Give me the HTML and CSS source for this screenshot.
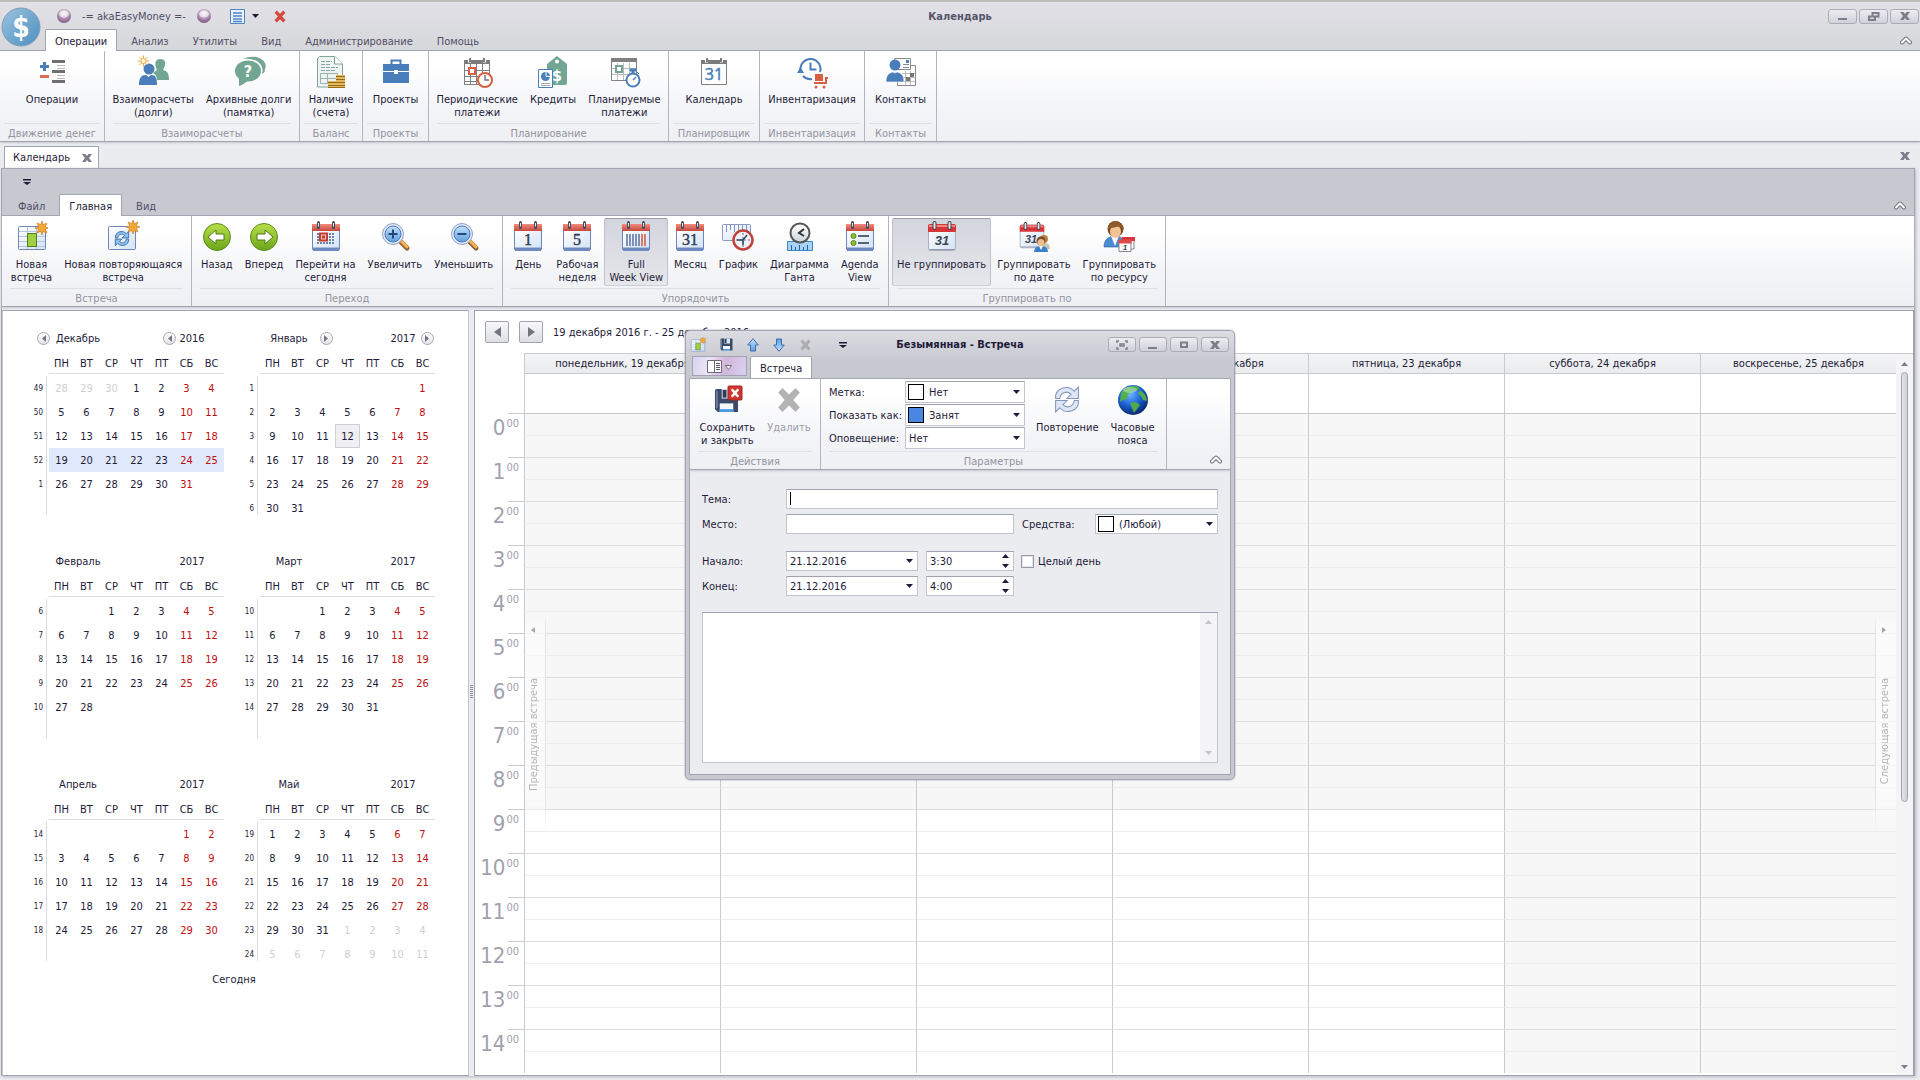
FILE: index.html
```html
<!DOCTYPE html>
<html lang="ru">
<head>
<meta charset="utf-8">
<title>Календарь</title>
<link rel="stylesheet" href="styles.css">
</head>
<body>
<svg class="defs" aria-hidden="true">
  <defs>
    <linearGradient id="g-red" x1="0" y1="0" x2="0" y2="1"><stop offset="0" stop-color="#ef8d7e"/><stop offset="1" stop-color="#c9473c"/></linearGradient>
    <linearGradient id="g-page" x1="0" y1="0" x2="1" y2="1"><stop offset="0" stop-color="#ffffff"/><stop offset="1" stop-color="#d3e2f4"/></linearGradient>
    <linearGradient id="g-green" x1="0" y1="0" x2="0" y2="1"><stop offset="0" stop-color="#b9e048"/><stop offset="1" stop-color="#6ca51c"/></linearGradient>
    <linearGradient id="g-blue" x1="0" y1="0" x2="0" y2="1"><stop offset="0" stop-color="#c4e2fb"/><stop offset="1" stop-color="#5f9fdf"/></linearGradient>
    <linearGradient id="g-grey" x1="0" y1="0" x2="0" y2="1"><stop offset="0" stop-color="#ffffff"/><stop offset="1" stop-color="#cfd4dc"/></linearGradient>
    <radialGradient id="g-orb" cx=".5" cy=".3" r=".7"><stop offset="0" stop-color="#f5eaf5"/><stop offset=".55" stop-color="#b193b5"/><stop offset="1" stop-color="#7a5a80"/></radialGradient>
    <linearGradient id="g-logo" x1="0" y1="0" x2="1" y2="1"><stop offset="0" stop-color="#9cc3e0"/><stop offset="1" stop-color="#4c8fc0"/></linearGradient>
    <radialGradient id="g-globe" cx=".4" cy=".3" r=".75"><stop offset="0" stop-color="#6fb8ff"/><stop offset=".5" stop-color="#1d62d8"/><stop offset="1" stop-color="#06205e"/></radialGradient>
    <symbol id="cal" viewBox="0 0 32 32">
      <path d="M2.500 8.500h27v20h-27z" fill="url(#g-page)" stroke="#6f86bb"/>
      <path d="M3 27h26v3H3z" fill="#6e8ac0"/><path d="M3 26.500h26" stroke="#a9bde0"/>
      <path d="M2 3h28v7H2z" fill="url(#g-red)"/>
      <path d="M8.500 1.500v5M23.500 1.500v5" stroke="#454d60" stroke-width="3" stroke-linecap="round"/><path d="M8.500 2v3.500M23.500 2v3.500" stroke="#e6e9ef"/>
    </symbol>
    <symbol id="cal-plain" viewBox="0 0 32 32">
      <rect x="2.500" y="3.500" width="27" height="26" rx="2" fill="url(#g-page)" stroke="#aab0c0"/>
      <path d="M3 28.500h26" stroke="#8e98ad"/>
      <path d="M2 5q0-2 2-2h24q2 0 2 2v6H2z" fill="#d8343a"/><path d="M3 4h26v2H3z" fill="#ee8a86"/>
      <path d="M8.500 2v5M23.500 2v5" stroke="#3d3f4a" stroke-width="4" stroke-linecap="round"/><path d="M8.500 2v5M23.500 2v5" stroke="#e4e6ea" stroke-width="2" stroke-linecap="round"/>
    </symbol>
    <symbol id="cal-line" viewBox="0 0 32 32">
      <path d="M3.500 5v23.500h25V5" fill="#fff" stroke="#808080"/><path d="M3 4h26v4H3z" fill="#7b7b7b"/>
      <path d="M7 1.500h3v5H7zM22 1.500h3v5h-3z" fill="#fff"/><path d="M8 2h2v4H8zM22 2h2v4h-2z" fill="#7b7b7b"/>
    </symbol>
    <symbol id="spark" viewBox="0 0 14 14"><path d="M7 0l1.300 3.600L12 2l-1.600 3.700L14 7l-3.600 1.300L12 12 8.300 10.400 7 14 5.700 10.400 2 12l1.600-3.700L0 7l3.600-1.300L2 2l3.700 1.600z" fill="#f3a93a" stroke="#c9751d" stroke-width=".6"/></symbol>
    <symbol id="floppy" viewBox="0 0 26 26"><path d="M1 3q0-2 2-2h20q2 0 2 2v22H4l-3-3z" fill="#3a4a68"/><path d="M2 3h2v18H2z" fill="#6d7d9b"/><path d="M8 1h12v10H8z" fill="#d5e6f8"/><path d="M9 2h4v8H9z" fill="#2f3d58"/><path d="M6 16h14v9H6z" fill="#f4f8fc"/><path d="M6 22h14v3H6z" fill="#4b9be0"/></symbol>
    <symbol id="cross" viewBox="0 0 24 24"><path d="M2 5l4-4 6 6 6-6 4 4-6 7 6 7-4 4-6-6-6 6-4-4 6-7z" fill="currentColor"/></symbol>
    <symbol id="arrow-up" viewBox="0 0 12 14"><path d="M6 .700L11.300 7H8.500v6h-5V7H.700z" fill="url(#g-blue)" stroke="#3c6eb4"/></symbol>
    <symbol id="cycle" viewBox="0 0 26 28"><path d="M2 13C1 3 14-1 20 6l4-4v11H13l4-4C13 5 7 7 6 13z"/><path d="M24 15c1 10-12 14-18 7l-4 4V15h11l-4 4c4 4 10 2 11-4z"/></symbol>
    <symbol id="chev" viewBox="0 0 12 10"><path d="M2 7.500L6 3.500l4 4" fill="none" stroke="#73747f" stroke-width="4" stroke-linecap="round" stroke-linejoin="round"/><path d="M2 7.500L6 3.500l4 4" fill="none" stroke="#fff" stroke-width="2" stroke-linecap="round" stroke-linejoin="round"/></symbol>
    <symbol id="close" viewBox="0 0 10 8"><path d="M0 0h3.500L5 2l1.500-2H10L7 4l3 4H6.500L5 6 3.500 8H0l3-4z" fill="#7c7d8a"/></symbol>
    <symbol id="orb" viewBox="0 0 16 16"><circle cx="8" cy="8" r="7" fill="url(#g-orb)"/><ellipse cx="8" cy="6" rx="5" ry="3.600" fill="#fff" opacity=".6"/></symbol>
    <symbol id="down" viewBox="0 0 7 4"><path d="M0 0h7L3.500 4z" fill="#1e1b39"/></symbol>
    <symbol id="more" viewBox="0 0 8 6"><path d="M0 0h8v1.500H0zM0 3h8L4 6z" fill="#1e1b39"/></symbol>
    <symbol id="newcal" viewBox="0 0 32 32">
      <rect x="2.500" y="5.500" width="27" height="23" rx="1" fill="url(#g-page)" stroke="#7186b8"/>
      <path d="M3 10.500h26M3 15.500h26M3 20.500h26M3 25.500h26M11.500 6v22M20.500 6v22" stroke="#b4c3e0"/>
      <path d="M11.500 12.500h9v13h-9z" fill="#a2d040" stroke="#4f7d26"/>
      <use href="#spark" x="19" y="0" width="14" height="14"/>
    </symbol>
  </defs>
</svg>

<div class="app">
  <header class="app-head">
    <svg class="logo" viewBox="0 0 40 40" width="40" height="40"><circle cx="20" cy="20" r="19" fill="url(#g-logo)" stroke="#7f9db4"/><text x="20" y="30" text-anchor="middle" class="t-logo">$</text></svg>
    <div class="titlebar">
      <div class="qat">
        <svg width="16" height="16"><use href="#orb"/></svg>
        <span>-= akaEasyMoney =-</span>
        <svg width="16" height="16"><use href="#orb"/></svg>
        <button class="bare split" aria-label="Список">
          <svg width="15" height="15" viewBox="0 0 15 15"><path d="M.500.500h14v14H.500z" fill="#eaf2fb" stroke="#4d86c6"/><path d="M3 4h9M3 7h9M3 10h9M3 12.500h9" stroke="#4d86c6" stroke-width="1.500"/></svg>
          <svg width="7" height="4"><use href="#down"/></svg>
        </button>
        <button class="bare red" aria-label="Закрыть"><svg width="14" height="13"><use href="#cross"/></svg></button>
      </div>
      <h1 class="win-title">Календарь</h1>
      <div class="winbtns">
        <button class="winbtn" aria-label="Свернуть"><svg width="10" height="8"><path d="M0 6h9v2H0z" fill="#7c7d8a"/></svg></button>
        <button class="winbtn" aria-label="Восстановить"><svg width="12" height="9"><path d="M4.500 1h6v3.500h-6zM1 4.500h6V8H1z" fill="none" stroke="#7c7d8a" stroke-width="2"/></svg></button>
        <button class="winbtn" aria-label="Закрыть окно"><svg width="10" height="8"><use href="#close"/></svg></button>
      </div>
    </div>
    <nav class="tabs main-tabs">
      <button class="tab on">Операции</button><button class="tab">Анализ</button><button class="tab">Утилиты</button><button class="tab">Вид</button><button class="tab">Администрирование</button><button class="tab">Помощь</button>
      <button class="bare collapse" aria-label="Свернуть ленту"><svg width="12" height="10"><use href="#chev"/></svg></button>
    </nav>
  </header>

  <section class="ribbon">
    <div class="group g105"><div class="items">
      <button class="item"><svg width="32" height="32" viewBox="0 0 32 32"><path d="M4 9h9v3H4zM7 6h3v9H7z" fill="#4a7ebb"/><path d="M4 19h9v3H4z" fill="#db6f55"/><path d="M16 4h13v3H16zM16 14h13v3H16zM16 24h13v3H16z" fill="#6f6f6f"/><path d="M21 9.500h8M21 12.500h8M21 19.500h8M21 22.500h8" stroke="#bcbcbc"/></svg>Операции</button>
    </div><div class="cap">Движение денег</div></div>
    <div class="group g195"><div class="items">
      <button class="item"><svg width="32" height="32" viewBox="0 0 32 32"><path d="M23 3c7 0 6 6 3 11 5 1 6 4 6 10H20c0-4-2-6-4-7l4-3c-3-6-2-11 3-11z" fill="#73a692"/><circle cx="12" cy="13" r="5.500" fill="#4a7ebb"/><path d="M2 29c0-7 2-10 7-10l2.500 2 2.500-2c5 0 6 3 6 10z" fill="#4a7ebb"/><path d="M6.500-.500v11M1 5h11M2.500 1l8 8M10.500 1l-8 8" stroke="#f0a93c"/><circle cx="6.500" cy="5" r="2.500" fill="#fff" stroke="#f0a93c"/></svg>Взаиморасчеты<br>(долги)</button>
      <button class="item"><svg width="32" height="32" viewBox="0 0 32 32"><path d="M10 3C22-3 36 4 32 13c0 3-1 4-3 5 3-9-6-17-19-15z" fill="#73a692"/><ellipse cx="15" cy="15" rx="13" ry="10.500" fill="#73a692"/><path d="M6 21v9q6-2 9-6z" fill="#73a692"/><text x="15" y="21" text-anchor="middle" class="t-q">?</text></svg>Архивные долги<br>(памятка)</button>
    </div><div class="cap">Взаиморасчеты</div></div>
    <div class="group g63"><div class="items">
      <button class="item"><svg width="32" height="32" viewBox="0 0 32 32"><path d="M4.500.500H20L27.500 8v23h-25V2.500z" fill="#edf3f1" stroke="#84a39b"/><path d="M19.500.500V8h8" fill="#fff" stroke="#84a39b"/><path d="M6 5.500h11M6 8.500h10M6 11.500h17M6 14.500h14" stroke="#8aa59f" stroke-dasharray="4 1"/><path d="M5.500 17.500h17v10h-17zM5.500 22.500h17M12.500 17.500v10" fill="none" stroke="#9ab3ad"/><path d="M21 19h9v13h-9zM13 25h9v7h-9z" fill="#e2b85a"/><path d="M21 20.500h9M21 23.500h9M21 26.500h9M13 26.500h17M13 29.500h17M13 31.500h17" stroke="#956a1c"/></svg>Наличие<br>(счета)</button>
    </div><div class="cap">Баланс</div></div>
    <div class="group g66"><div class="items">
      <button class="item"><svg width="32" height="32" viewBox="0 0 32 32"><path d="M3 8h26v19H3z" fill="#4a7ebb"/><path d="M11.500 8V4.500h9V8" fill="none" stroke="#4a7ebb" stroke-width="2"/><path d="M3 15.500h26" stroke="#fff"/><path d="M14 14h4v4h-4z" fill="#fff"/></svg>Проекты</button>
    </div><div class="cap">Проекты</div></div>
    <div class="group g240"><div class="items">
      <button class="item"><svg width="32" height="32" viewBox="0 0 32 32"><use href="#cal-line"/><path d="M4 14.500h24M4 20.500h24M4 25.500h24M9.500 8v20M15.500 8v20M21.500 8v20" stroke="#808080"/><path d="M8 12h6v6H8z" fill="#fff" stroke="#d75f43" stroke-width="2"/><circle cx="24" cy="24" r="7" fill="#fff" stroke="#d75f43" stroke-width="2"/><path d="M24 19v5h4" fill="none" stroke="#777" stroke-width="1.500"/></svg>Периодические<br>платежи</button>
      <button class="item"><svg width="32" height="32" viewBox="0 0 32 32"><path d="M10 8l10-8 10 8v19q0 2-2 2H10z" fill="#73a692"/><circle cx="20" cy="5.500" r="2" fill="#fff"/><text x="20" y="25" text-anchor="middle" class="t-q">$</text><path d="M1.500 13.500h14v18h-14z" fill="#fff" stroke="#4a7ebb"/><circle cx="8.500" cy="20.500" r="4.500" fill="#4a7ebb"/><path d="M9 16v4.500h4.500" stroke="#fff" fill="none"/><path d="M4 27.500h9M4 29.500h9" stroke="#aaa"/></svg>Кредиты</button>
      <button class="item"><svg width="32" height="32" viewBox="0 0 32 32"><path d="M3.500 5.500h25v19h-25z" fill="#fff" stroke="#808080"/><path d="M3 2h26v4H3z" fill="#808080"/><path d="M4 12.500h24M4 18.500h24M9.500 7v17M15.500 7v17M21.500 7v17" stroke="#bbb"/><path d="M8 10h6v6H8z" fill="#fff" stroke="#73a692" stroke-width="2"/><circle cx="25" cy="24" r="6.500" fill="#fff" stroke="#4a7ebb" stroke-width="2"/><path d="M22 13h6v2h-2v2h-2v-2h-2zM29 16l2 2" fill="#4a7ebb" stroke="#4a7ebb"/><path d="M25 24l3-3" stroke="#4a7ebb" stroke-width="1.500"/></svg>Планируемые<br>платежи</button>
    </div><div class="cap">Планирование</div></div>
    <div class="group g91"><div class="items">
      <button class="item"><svg width="32" height="32" viewBox="0 0 32 32"><use href="#cal-line"/><text x="16" y="24" text-anchor="middle" class="t-31">31</text></svg>Календарь</button>
    </div><div class="cap">Планировщик</div></div>
    <div class="group g105"><div class="items">
      <button class="item"><svg width="32" height="32" viewBox="0 0 32 32"><path d="M4.500 14A10 10 0 1 1 24 16M7 20a10 10 0 0 0 9 3" fill="none" stroke="#4a7ebb" stroke-width="2"/><path d="M1 17l3.500-6L8 17z" fill="#4a7ebb"/><path d="M14.500 6.500v7h6" fill="none" stroke="#4a7ebb" stroke-width="2"/><path d="M19 18h8v7h-8z" fill="#d75f43"/><path d="M18 27h12v-5h2" fill="none" stroke="#d75f43" stroke-width="2"/><circle cx="20" cy="31" r="1.500" fill="#d75f43"/><circle cx="28" cy="31" r="1.500" fill="#d75f43"/></svg>Инвентаризация</button>
    </div><div class="cap">Инвентаризация</div></div>
    <div class="group g72"><div class="items">
      <button class="item"><svg width="32" height="32" viewBox="0 0 32 32"><path d="M14.500 9.500h16v20h-18v-8" fill="#fff" stroke="#8a8a8a"/><path d="M9.500 2.500h16v11H9.500z" fill="#fff" stroke="#8a8a8a"/><path d="M18 8.500h6M18 11.500h6" fill="none" stroke="#8a8a8a"/><path d="M21 4h3v3h-3z" fill="#4a7ebb"/><path d="M17 17.500h13M17 21.500h13M17 25.500h13M20.500 15v14M25.500 15v14" stroke="#bbb"/><path d="M25 17h4v4h-4zM21 21h4v4h-4z" fill="#777"/><circle cx="10" cy="9" r="5.500" fill="#4a7ebb"/><path d="M1 26c0-6 2-9 7-10l2 1 2-1c5 1 7 4 7 10z" fill="#4a7ebb" stroke="#fff" stroke-width=".6"/></svg>Контакты</button>
    </div><div class="cap">Контакты</div></div>
  </section>

  <div class="doctabs">
    <div class="doctab">Календарь<button class="bare" aria-label="Закрыть вкладку"><svg width="10" height="8"><use href="#close"/></svg></button></div>
    <button class="bare" aria-label="Закрыть документ"><svg width="10" height="8"><use href="#close"/></svg></button>
  </div>

  <main class="doc">
    <div class="doc-head">
      <button class="bare doc-more" aria-label="Настройка панели"><svg width="8" height="6"><use href="#more"/></svg></button>
      <nav class="tabs doc-tabs">
        <button class="tab">Файл</button><button class="tab on">Главная</button><button class="tab">Вид</button>
        <button class="bare collapse" aria-label="Свернуть ленту"><svg width="12" height="10"><use href="#chev"/></svg></button>
      </nav>
    </div>
    <section class="ribbon">
      <div class="group g190"><div class="items">
        <button class="item"><svg width="32" height="32"><use href="#newcal"/></svg>Новая<br>встреча</button>
        <button class="item"><svg width="32" height="32" viewBox="0 0 32 32"><rect x="1.500" y="5.500" width="27" height="23" rx="1" fill="url(#g-page)" stroke="#7186b8"/><use href="#cycle" x="7" y="9" width="16" height="17" fill="#8cc0ee" stroke="#3a6ea8" stroke-width="1.500"/><use href="#spark" x="19" y="-1" width="14" height="14"/></svg>Новая повторяющаяся<br>встреча</button>
      </div><div class="cap">Встреча</div></div>
      <div class="group g311"><div class="items">
        <button class="item"><svg width="32" height="32" viewBox="0 0 32 32"><circle cx="16" cy="16" r="13.500" fill="url(#g-green)" stroke="#5b8a1b"/><path d="M7 16l8-7v4h8v6h-8v4z" fill="#fff" stroke="#4f7a18"/></svg>Назад</button>
        <button class="item"><svg width="32" height="32" viewBox="0 0 32 32"><circle cx="16" cy="16" r="13.500" fill="url(#g-green)" stroke="#5b8a1b"/><path d="M25 16l-8-7v4H9v6h8v4z" fill="#fff" stroke="#4f7a18"/></svg>Вперед</button>
        <button class="item"><svg width="32" height="32" viewBox="0 0 32 32"><use href="#cal"/><path d="M7 13h18M7 16h18M7 19h18M7 22h18" stroke="#6d84b0" stroke-width="2" stroke-dasharray="2 1"/><path d="M10 12.500h7v7h-7z" fill="#f6c9c0" stroke="#c33e30" stroke-width="2"/><path d="M12 14.500h3v3h-3z" fill="#c33e30"/></svg>Перейти на<br>сегодня</button>
        <button class="item"><svg width="32" height="32" viewBox="0 0 32 32"><path d="M20 19l8 8" stroke="#8b6238" stroke-width="5" stroke-linecap="round"/><path d="M22 20l6 6" stroke="#f5b354" stroke-width="3" stroke-linecap="round"/><circle cx="14" cy="13" r="10.500" fill="#e4edf8" stroke="#8a9fc8"/><circle cx="14" cy="13" r="8" fill="url(#g-blue)" stroke="#4a74bb"/><path d="M14 8.500v9M9.500 13h9" stroke="#24467f" stroke-width="2"/></svg>Увеличить</button>
        <button class="item"><svg width="32" height="32" viewBox="0 0 32 32"><path d="M20 19l8 8" stroke="#8b6238" stroke-width="5" stroke-linecap="round"/><path d="M22 20l6 6" stroke="#f5b354" stroke-width="3" stroke-linecap="round"/><circle cx="14" cy="13" r="10.500" fill="#e4edf8" stroke="#8a9fc8"/><circle cx="14" cy="13" r="8" fill="url(#g-blue)" stroke="#4a74bb"/><path d="M9.500 13h9" stroke="#24467f" stroke-width="2"/></svg>Уменьшить</button>
      </div><div class="cap">Переход</div></div>
      <div class="group g386"><div class="items">
        <button class="item"><svg width="32" height="32" viewBox="0 0 32 32"><use href="#cal"/><text x="16" y="24" text-anchor="middle" class="t-cal">1</text></svg>День</button>
        <button class="item"><svg width="32" height="32" viewBox="0 0 32 32"><use href="#cal"/><text x="16" y="24" text-anchor="middle" class="t-cal">5</text></svg>Рабочая<br>неделя</button>
        <button class="item pressed"><svg width="32" height="32" viewBox="0 0 32 32"><use href="#cal"/><path d="M7 13v12M10 13v12M13 13v12M16 13v12M19 13v12" stroke="#7e90b8" stroke-width="2"/><path d="M22 13v12M25 13v12" stroke="#d97a68" stroke-width="2"/></svg>Full<br>Week View</button>
        <button class="item"><svg width="32" height="32" viewBox="0 0 32 32"><use href="#cal"/><text x="16" y="24" text-anchor="middle" class="t-cal">31</text></svg>Месяц</button>
        <button class="item"><svg width="32" height="32" viewBox="0 0 32 32"><rect x=".500" y="3.500" width="28" height="16" rx="1" fill="url(#g-page)" stroke="#8b9ac0"/><path d="M4.500 4v7M8.500 4v5M12.500 4v7M16.500 4v5M20.500 4v7M24.500 4v5" stroke="#7f93bd"/><circle cx="21" cy="19" r="9.500" fill="#eef3f8" stroke="#c04238" stroke-width="2.500"/><path d="M21 12v14M14 19h14" stroke="#566a8c" stroke-dasharray="2 2"/><path d="M25 14l-4 5v5M15 19h6" stroke="#35435c" stroke-width="1.500" fill="none"/></svg>График</button>
        <button class="item"><svg width="32" height="32" viewBox="0 0 32 32"><path d="M3.500 20.500h25v9h-25z" fill="#a7d3fb" stroke="#3c84c8"/><path d="M7.500 29v-5M11.500 29v-3M15.500 29v-5M19.500 29v-3M23.500 29v-5" stroke="#2f5f9a"/><circle cx="16" cy="12" r="9.500" fill="url(#g-grey)" stroke="#555" stroke-width="2"/><path d="M20 8l-5 4 5 3" fill="none" stroke="#333" stroke-width="2"/></svg>Диаграмма<br>Ганта</button>
        <button class="item"><svg width="32" height="32" viewBox="0 0 32 32"><use href="#cal"/><circle cx="9.500" cy="15" r="2.500" fill="#8fbf3a" stroke="#5d8a20"/><circle cx="9.500" cy="22" r="2.500" fill="#8fbf3a" stroke="#5d8a20"/><path d="M14 15h11M14 22h11" stroke="#27334e" stroke-width="1.500"/></svg>Agenda<br>View</button>
      </div><div class="cap">Упорядочить</div></div>
      <div class="group g277"><div class="items">
        <button class="item pressed"><svg width="32" height="32" viewBox="0 0 32 32"><use href="#cal-plain"/><text x="16" y="24" text-anchor="middle" class="t-ital">31</text></svg>Не группировать</button>
        <button class="item"><svg width="32" height="32" viewBox="0 0 32 32"><use href="#cal-plain" width="28" height="28" y="1"/><text x="13" y="22" text-anchor="middle" class="t-ital s">31</text><circle cx="26" cy="18" r="4" fill="#b98246"/><path d="M22 28q0-6 5-6t5 6z" fill="#c6c9b0"/><circle cx="23" cy="20" r="4.500" fill="#7a4a1e"/><circle cx="23" cy="21.500" r="3.500" fill="#edbd8c"/><path d="M16 31q0-6 7-6t7 6z" fill="#3f7fca"/><path d="M21 25l2 4 2-4z" fill="#fff"/></svg>Группировать<br>по дате</button>
        <button class="item"><svg width="32" height="32" viewBox="0 0 32 32"><path d="M1 26c0-7 4-11 11-11s10 4 10 11z" fill="#4c8bd2" stroke="#2c5c9d" stroke-width=".6"/><path d="M8 15l4 10 4-10z" fill="#f4f7fb"/><circle cx="12.500" cy="8" r="8" fill="#7b4a1d"/><ellipse cx="12.500" cy="10.500" rx="5.500" ry="6.500" fill="#f0c295"/><path d="M5 8q1-7 8-7t8 7q-4-3-8-2t-8 2z" fill="#8f5c2b"/><path d="M19 17h12v11H19z" fill="#fff" stroke="#888"/><path d="M19 16h13v4H19z" fill="#d8343a"/><path d="M16 19.500h12v11H16z" fill="#fff" stroke="#888"/><path d="M15.500 18.500h13v4h-13z" fill="#e04a4a"/><text x="22" y="29" text-anchor="middle" class="t-tiny">1</text></svg>Группировать<br>по ресурсу</button>
      </div><div class="cap">Группировать по</div></div>
    </section>

    <div class="work">
      <aside class="navigator">
        <div class="months" id="months"></div>
        <button class="bare today-link">Сегодня</button>
      </aside>
      <div class="splitter"></div>
      <section class="schedule">
        <div class="range">
          <button class="navbtn" aria-label="Назад"><svg width="7" height="10"><path d="M7 0v10L0 5z" fill="#74757f"/></svg></button>
          <button class="navbtn" aria-label="Вперед"><svg width="7" height="10"><path d="M0 0v10l7-5z" fill="#74757f"/></svg></button>
          <span>19 декабря 2016 г. - 25 декабря 2016</span>
        </div>
        <div class="week">
          <div class="grid-wrap">
            <table class="grid">
              <thead>
                <tr><td class="corner"></td><th>понедельник, 19 декабря</th><th>вторник, 20 декабря</th><th>среда, 21 декабря</th><th>четверг, 22 декабря</th><th>пятница, 23 декабря</th><th>суббота, 24 декабря</th><th>воскресенье, 25 декабря</th></tr>
                <tr class="allday"><td class="corner"></td><td></td><td></td><td></td><td></td><td></td><td></td><td></td></tr>
              </thead>
              <tbody id="slots"></tbody>
            </table>
            <button class="appt prev"><svg width="4" height="6"><path d="M4 0v6L0 3z" fill="#a4a5ac"/></svg><span>Предыдущая встреча</span></button>
            <button class="appt next"><svg width="4" height="6"><path d="M0 0v6l4-3z" fill="#a4a5ac"/></svg><span>Следующая встреча</span></button>
          </div>
          <div class="vscroll"><svg width="7" height="4"><path d="M0 4h7L3.500 0z" fill="#7c7d8a"/></svg><div class="track"><div class="thumb"></div></div><svg width="7" height="4"><path d="M0 0h7L3.500 4z" fill="#7c7d8a"/></svg></div>
        </div>
      </section>
    </div>
  </main>
</div>

<div class="dialog" role="dialog" aria-label="Безымянная - Встреча">
  <div class="dlg-title">
    <div class="dlg-qat">
      <button class="bare" aria-label="Новая"><svg width="16" height="16"><use href="#newcal"/></svg></button>
      <button class="bare" aria-label="Сохранить"><svg width="13" height="13"><use href="#floppy"/></svg></button>
      <button class="bare" aria-label="Предыдущая"><svg width="12" height="14"><use href="#arrow-up"/></svg></button>
      <button class="bare flip" aria-label="Следующая"><svg width="12" height="14"><use href="#arrow-up"/></svg></button>
      <button class="bare dim" aria-label="Удалить"><svg width="13" height="12"><use href="#cross"/></svg></button>
      <button class="bare gap" aria-label="Настройка"><svg width="8" height="6"><use href="#more"/></svg></button>
    </div>
    <h2 class="win-title">Безымянная - Встреча</h2>
    <div class="winbtns">
      <button class="winbtn" aria-label="Во весь экран"><svg width="12" height="10" viewBox="0 0 12 10"><path d="M1 3V1h2M9 1h2v2M11 7v2H9M3 9H1V7M4 4h4v2H4z" fill="none" stroke="#7c7d8a" stroke-width="1.500"/></svg></button>
      <button class="winbtn" aria-label="Свернуть"><svg width="10" height="8"><path d="M0 6h9v2H0z" fill="#7c7d8a"/></svg></button>
      <button class="winbtn" aria-label="Развернуть"><svg width="9" height="8"><path d="M1 1.500h6V6H1z" fill="none" stroke="#7c7d8a" stroke-width="2"/></svg></button>
      <button class="winbtn" aria-label="Закрыть"><svg width="10" height="8"><use href="#close"/></svg></button>
    </div>
  </div>
  <div class="tabs dlg-tabs">
    <button class="appbtn" aria-label="Меню"><svg width="25" height="13" viewBox="0 0 25 13"><path d="M.500.500h14v12H.500zM7.500.500v12" fill="#fff" stroke="#6b6b76"/><path d="M9 3.500h4M9 5.500h4M9 7.500h4M9 9.500h4" stroke="#55555f"/><path d="M18.500 5.500h6l-3 4z" fill="#fff" stroke="#6b6b76"/></svg></button>
    <button class="tab on">Встреча</button>
  </div>
  <div class="dlg-body">
    <section class="ribbon">
      <div class="group g131"><div class="items">
        <button class="item"><svg width="32" height="32" viewBox="0 0 32 32"><use href="#floppy" x="3" y="4" width="25" height="25"/><rect x="17" y="2" width="14" height="14" rx="1" fill="#d0362f" stroke="#a32520"/><use href="#cross" x="19" y="4" width="10" height="10" color="#fff"/></svg>Сохранить<br>и закрыть</button>
        <button class="item" disabled><svg width="32" height="32" viewBox="0 0 32 32"><use href="#cross" x="3" y="3" width="26" height="26" color="#b3b3b3"/></svg>Удалить</button>
      </div><div class="cap">Действия</div></div>
      <div class="group g346"><div class="items params">
        <div class="fields">
          <label for="mark">Метка:</label>
          <span class="combo"><i class="sw"></i><select id="mark" class="with-sw"><option>Нет</option></select><svg width="7" height="4"><use href="#down"/></svg></span>
          <label for="showas">Показать как:</label>
          <span class="combo"><i class="sw blue"></i><select id="showas" class="with-sw"><option>Занят</option></select><svg width="7" height="4"><use href="#down"/></svg></span>
          <label for="remind">Оповещение:</label>
          <span class="combo"><select id="remind"><option>Нет</option></select><svg width="7" height="4"><use href="#down"/></svg></span>
        </div>
        <button class="item"><svg width="32" height="32" viewBox="0 0 32 32"><use href="#cycle" x="2" y="1" width="28" height="29" fill="#dfe7f4" stroke="#8296bd"/></svg>Повторение</button>
        <button class="item"><svg width="32" height="32" viewBox="0 0 32 32"><circle cx="16" cy="16" r="15" fill="url(#g-globe)"/><path d="M4 9c3-5 8-7 12-7l-1 6-4 2-1 5-4 1-3 2zM13 19l6-1 4 3-3 4-3 4-2-5zM23 6c4 3 7 6 7 11l-4-1-2-4-3-2zM14 2l6 0 3 3-5 2z" fill="#55b53c" opacity=".9"/><ellipse cx="13" cy="6" rx="7" ry="3" fill="#fff" opacity=".35"/></svg>Часовые<br>пояса</button>
      </div><div class="cap">Параметры</div></div>
      <button class="bare collapse" aria-label="Свернуть ленту"><svg width="12" height="10"><use href="#chev"/></svg></button>
    </section>
    <form class="form">
      <div class="row"><label class="lead" for="subj">Тема:</label><span class="box grow"><input id="subj" type="text"><i class="caret"></i></span></div>
      <div class="row"><label class="lead" for="place">Место:</label><span class="box grow"><input id="place" type="text"></span>
        <label class="mid" for="res">Средства:</label><span class="combo res"><i class="sw"></i><select id="res" class="with-sw"><option>(Любой)</option></select><svg width="7" height="4"><use href="#down"/></svg></span></div>
      <div class="row gap"><label class="lead" for="start">Начало:</label><span class="box date"><input id="start" type="text" value="21.12.2016"><button type="button" class="bare" aria-label="Выбрать"><svg width="7" height="4"><use href="#down"/></svg></button></span>
        <span class="box time"><input type="text" value="3:30" aria-label="Время начала"><span class="spin"><svg width="7" height="4"><path d="M0 4h7L3.500 0z" fill="#1e1b39"/></svg><svg width="7" height="4"><use href="#down"/></svg></span></span>
        <label class="check"><input type="checkbox">Целый день</label></div>
      <div class="row"><label class="lead" for="end">Конец:</label><span class="box date"><input id="end" type="text" value="21.12.2016"><button type="button" class="bare" aria-label="Выбрать"><svg width="7" height="4"><use href="#down"/></svg></button></span>
        <span class="box time"><input type="text" value="4:00" aria-label="Время окончания"><span class="spin"><svg width="7" height="4"><path d="M0 4h7L3.500 0z" fill="#1e1b39"/></svg><svg width="7" height="4"><use href="#down"/></svg></span></span></div>
      <div class="notes"><textarea aria-label="Описание"></textarea><div class="nscroll"><svg width="7" height="4"><path d="M0 4h7L3.500 0z" fill="#c3c4ca"/></svg><svg width="7" height="4"><path d="M0 0h7L3.500 4z" fill="#c3c4ca"/></svg></div></div>
    </form>
  </div>
</div>
<script src="app.js"></script>
</body>
</html>
```
FILE: styles.css
```css
:root {
  --ink: #1e1b39;
  --line: #a2a3b0;
  --frame: #c8c8d1;
  --face: #ebecf0;
  --grid: #c9c9d1;
}
* { box-sizing: border-box; }
body {
  margin: 0;
  background: var(--face);
  color: var(--ink);
  font: 11px/13px "DejaVu Sans Condensed", "Noto Sans", sans-serif;
}
button, input, select, textarea { font: inherit; color: inherit; margin: 0; }
svg { display: block; flex: none; overflow: visible; }
.defs { position: absolute; width: 0; height: 0; }
.app { display: flex; flex-direction: column; min-height: 100vh; padding-bottom: 4px; }
.bare { border: 0; background: none; padding: 0; display: flex; align-items: center; }

/* Window header */
.app-head {
  position: relative;
  border-top: 2px solid #bcbdbd;
  background: linear-gradient(#e1e1e7, #d6d7da);
}
.logo { position: absolute; left: 1px; top: 5px; }
.titlebar { display: grid; grid-template-columns: 1fr auto 1fr; align-items: center; height: 27px; padding-top: 1px; }
.qat { display: flex; align-items: center; gap: 10px; padding-left: 56px; color: #504f66; }
.split { gap: 7px; margin: 0 4px 0 8px; }
.red { color: #d4493a; }
.win-title { margin: 0; font-size: 11px; font-weight: bold; color: #55546b; }
.winbtns { display: flex; justify-content: flex-end; gap: 2px; padding-right: 1px; }
.winbtn {
  width: 29px; height: 15px; padding: 0;
  display: flex; align-items: center; justify-content: center;
  border: 1px solid #abacb6; border-radius: 3px;
  background: linear-gradient(#ededf1, #d0d1d7);
}

/* Ribbon tabs */
.tabs { display: flex; align-items: stretch; gap: 4px; height: 22px; border-bottom: 1px solid var(--line); }
.tab {
  position: relative;
  margin: 0 0 -1px; padding: 1px 9px 0; height: 22px;
  border: 1px solid transparent; border-bottom: 0;
  background: none; color: #504f66;
}
.tab.on { background: #fff; border-color: var(--line); border-radius: 2px 2px 0 0; color: var(--ink); }
.main-tabs { padding: 0 8px 0 45px; }
.collapse { margin-left: auto; }

/* Ribbon */
.ribbon {
  display: flex; height: 91px;
  background: linear-gradient(#fff 15%, #f3f4f7 65%, #eff0f4);
  border-bottom: 1px solid var(--line);
  box-shadow: 0 1px 2px #c6c7cf;
}
.group { display: flex; flex-direction: column; border-right: 1px solid #b3b4be; flex: none; }
.items { display: flex; justify-content: center; align-items: flex-start; height: 72px; flex: none; padding-top: 2px; }
.item {
  display: flex; flex-direction: column; align-items: center;
  height: 68px; padding: 2px 5px 0;
  border: 1px solid transparent; background: none;
  text-align: center; line-height: 13px; white-space: nowrap;
}
.item svg { margin-bottom: 5px; }
.item:disabled { color: #9c9ca8; }
.pressed {
  padding: 2px 4px 0;
  background: linear-gradient(#d3d5dd, #e6e7eb);
  border-color: #9b9cab #bfc0c9 #cfd0d7; border-radius: 2px;
}
.cap {
  height: 18px; margin: 0 8px; padding-top: 3px; text-align: center; line-height: 13px; color: #93939f; white-space: nowrap;
  border-top: 1px solid #dedfe4;
}
.g63 { width: 63px; } .g66 { width: 66px; } .g72 { width: 72px; } .g91 { width: 91px; }
.g105 { width: 105px; } .g131 { width: 131px; } .g190 { width: 190px; } .g195 { width: 195px; }
.g240 { width: 240px; } .g277 { width: 277px; } .g311 { width: 311px; } .g346 { width: 346px; } .g386 { width: 386px; }
.g63 .cap, .g66 .cap, .g72 .cap, .g91 .cap, .g105 .cap { margin: 0 4px; }
.t-logo { font: bold 28px "DejaVu Sans Condensed", sans-serif; fill: #fff; }
.t-q { font: bold 16px "DejaVu Sans Condensed", sans-serif; fill: #fff; }
.t-31 { font: 16px "Open Sans", sans-serif; fill: #4a7ebb; stroke: #4a7ebb; stroke-width: .5px; }
.t-cal { font: 16px "Liberation Serif", serif; fill: #2e3a52; stroke: #2e3a52; stroke-width: .4px; }
.t-ital { font: italic bold 13px "Liberation Sans", sans-serif; fill: #3d4659; }
.t-ital.s { font-size: 11px; }
.t-tiny { font: italic bold 8px "Liberation Sans", sans-serif; fill: #3d4659; }

/* Document tabs */
.doctabs { display: flex; align-items: flex-end; justify-content: space-between; height: 26px; padding: 0 10px 0 4px; }
.doctab {
  display: flex; align-items: center; gap: 12px; height: 22px; padding: 0 6px 0 8px;
  background: #fff; border: 1px solid var(--line); border-bottom: 0;
}
.doctabs > .bare { height: 24px; }
.doc {
  flex: 1; display: flex; flex-direction: column;
  margin: 0 5px 0 1px; border: 1px solid var(--line); border-bottom: 0;
  box-shadow: 1px 1px 3px #b9bac3;
}
.doc-head { background: var(--frame); }
.doc-more { height: 25px; margin-left: 21px; }
.doc-tabs { padding: 0 8px 0 6px; }

.work { flex: 1; display: flex; margin-top: 3px; }
.navigator {
  width: 467px; flex: none; padding: 17px 0 0 25px; background: #fff;
  border: 1px solid var(--line); border-left-color: #c3c4cd; border-right-color: #c3c4cd;
}
.splitter {
  width: 5px; flex: none;
  background: repeating-linear-gradient(#8f909d 0 1px, transparent 1px 2px) center 375px / 3px 13px no-repeat;
}

/* Month calendars */
.months { display: grid; grid-template-columns: 197px 197px; gap: 31px 14px; }
.mhead { display: grid; grid-template-columns: 22px 56px 16px 1fr 14px 32px 17px; align-items: center; height: 20px; margin-bottom: 4px; text-align: center; }
.mhead .round { justify-self: end; }
.mhead .round:last-child { justify-self: center; }
.round {
  width: 13px; height: 13px; padding: 0; display: flex; align-items: center; justify-content: center;
  border: 1px solid #a7a8b2; border-radius: 50%; background: linear-gradient(#fff, #e3e4e9);
}
.month { border-collapse: collapse; table-layout: fixed; width: 196px; text-align: center; }
.month th { font-weight: normal; padding: 0 0 2px; height: 24px; width: 25px; background: linear-gradient(#dcdce1, #dcdce1) 0 21px / 100% 1px no-repeat; }
.month th.wk { width: 21px; background: none; }
.month td { padding: 0; height: 24px; }
.month td.wk { font-size: 8px; text-align: right; padding-right: 6px; background: linear-gradient(#dcdce1, #dcdce1) 18px 0 / 1px 100% no-repeat; }
.month tr:last-child td.wk { background-size: 1px 19px; }
.month .we { color: #c00d0d; }
.month .out { color: #cfcfd3; }
.month .sel { background: #e0e9fb; }
.month .now { background: #f0f0f2; box-shadow: inset 0 0 0 1px #cfd0d6; }
.today-link { width: 412px; height: 26px; justify-content: center; }

/* Schedule */
.schedule { flex: 1; min-width: 0; display: flex; flex-direction: column; background: #fff; border: 1px solid var(--line); }
.range { display: flex; align-items: center; gap: 10px; height: 42px; padding-left: 10px; }
.navbtn {
  width: 24px; height: 22px; padding: 0; display: flex; align-items: center; justify-content: center;
  border: 1px solid var(--line); border-radius: 2px; background: linear-gradient(#f8f8fa, #dedfe4);
}
.week { flex: 1; display: flex; }
.grid-wrap { flex: 1; position: relative; }
.grid { width: 100%; table-layout: fixed; border-collapse: separate; border-spacing: 0; }
.grid th, .grid td { padding: 0; }
.grid thead th {
  height: 21px; font-weight: normal; white-space: nowrap;
  border: solid var(--grid); border-width: 1px 0 1px 1px;
  background: linear-gradient(#f3f4f6, #e9ebed);
}
.grid .corner { width: 49px; border: 0; }
.allday td { height: 39px; border-left: 1px solid var(--grid); }
.grid tbody td { height: 22px; border-top: 1px solid #ececee; border-left: 1px solid var(--grid); background: #fff; }
.grid tbody .hour td { border-top-color: #dedee1; }
.grid tbody tr:first-child td { border-top-color: var(--grid); }
.grid tbody td.off { background: #f7f7f7; }
.grid tbody th {
  vertical-align: top; text-align: right; font-weight: normal; color: #a0a1ac;
  background: linear-gradient(var(--grid), var(--grid)) right top / 16px 1px no-repeat;
}
.hr { display: flex; justify-content: flex-end; gap: 1px; padding: 2px 5px 0 0; }
.hr b { font-size: 22px; line-height: 26px; font-weight: normal; }
.hr small { font-size: 11px; line-height: 18px; }
.appt {
  position: absolute; top: 263px; width: 21px; height: 218px; padding: 11px 4px 0 0;
  display: flex; flex-direction: column; align-items: center; gap: 45px;
  border: 0; color: #b4b5bc; background: rgba(252, 252, 252, .7);
  mask-image: linear-gradient(transparent, #000 6%, #000 80%, transparent);
}
.appt span { writing-mode: vertical-rl; transform: rotate(180deg); white-space: nowrap; line-height: 13px; }
.prev { left: 50px; border-right: 1px solid #e2e2e6; }
.next { right: 0; border-left: 1px solid #e2e2e6; }
.vscroll {
  width: 17px; display: flex; flex-direction: column; align-items: center; padding: 8px 0 6px;
  background: #f4f4f7; border-top: 1px solid var(--grid);
}
.track { flex: 1; padding-top: 6px; }
.thumb { width: 7px; height: 62%; border: 1px solid var(--line); border-radius: 4px; background: linear-gradient(90deg, #e2e2e8, #cfd0d7); }

/* Appointment window */
.dialog {
  position: absolute; left: 685px; top: 330px; width: 550px;
  padding: 0 3px 4px; border: 1px solid var(--line); border-radius: 5px;
  background: linear-gradient(#dcdce2, var(--frame) 30px);
  box-shadow: 0 0 2px #999aa6;
}
.dlg-title { display: grid; grid-template-columns: 1fr auto 1fr; align-items: center; height: 25px; padding-top: 2px; }
.dlg-title .win-title { color: var(--ink); }
.dlg-title .winbtns { gap: 3px; padding-right: 2px; }
.dlg-title .winbtn { width: 28px; }
.dlg-qat { display: flex; align-items: center; gap: 14px; padding-left: 1px; }
.dlg-qat .gap { margin-left: 13px; }
.flip { transform: rotate(180deg); }
.dim { color: #ababb0; }
.dlg-tabs { gap: 3px; height: 22px; padding-left: 3px; border-bottom: 0; }
.dlg-tabs .tab { margin: 0; }
.appbtn {
  width: 55px; height: 20px; padding: 0; display: flex; align-items: center; justify-content: center;
  border: 1px solid var(--line); background: linear-gradient(100deg, #d8d3f0, #ece4f7 30%, #d3b6dc 60%, #d9d0f0);
}
.dlg-body { border: 1px solid var(--line); background: var(--face); }
.dlg-body .collapse { align-self: flex-end; margin: 0 8px 5px auto; }
.items.params { justify-content: flex-start; padding-left: 8px; }
.fields { display: grid; grid-template-columns: 76px 120px; row-gap: 1px; align-items: center; margin-right: 5px; white-space: nowrap; }
.combo { position: relative; display: block; height: 22px; }
.combo select {
  appearance: none; width: 100%; height: 100%; padding: 0 18px 0 3px;
  background: #fff; border: 1px solid #c3c4cd; border-top-color: var(--line); border-radius: 0;
}
.combo select.with-sw { padding-left: 23px; }
.combo svg { position: absolute; right: 5px; top: 50%; margin-top: -2px; pointer-events: none; }
.sw { position: absolute; left: 3px; top: 50%; width: 16px; height: 16px; margin-top: -8px; border: 1px solid #000; background: #fff; }
.sw.blue { background: #4a87e2; }

.form { padding: 19px 12px 11px; }
.row { display: flex; align-items: center; height: 20px; margin-bottom: 5px; }
.row.gap { margin-top: 17px; }
.lead { width: 84px; }
.box { display: flex; align-items: center; position: relative; height: 20px; background: #fff; border: 1px solid #c3c4cd; border-top-color: var(--line); }
.box input { flex: 1; min-width: 0; height: 18px; padding: 0 3px; border: 0; background: none; outline: 0; }
.grow { flex: 1; }
.caret { position: absolute; left: 3px; top: 2px; width: 1px; height: 13px; background: #000; }
.mid { padding-left: 8px; width: 81px; }
.res { width: 123px; height: 20px; }
.date { width: 132px; margin-right: 8px; padding-right: 4px; }
.time { width: 88px; padding-right: 4px; margin-right: 7px; }
.spin { display: flex; flex-direction: column; gap: 6px; }
.check { display: flex; align-items: center; gap: 4px; }
.check input { appearance: none; width: 13px; height: 13px; background: #fff; border: 1px solid #9a9ba8; box-shadow: inset 0 0 0 1px #e4e4ea; }
.notes { display: flex; height: 151px; margin-top: 16px; background: #fff; border: 1px solid #c3c4cd; border-top-color: var(--line); }
.notes textarea { flex: 1; border: 0; padding: 3px; resize: none; outline: 0; background: none; }
.nscroll { width: 17px; display: flex; flex-direction: column; justify-content: space-between; align-items: center; padding: 7px 0; background: #f4f4f7; }
```
FILE: app.js
```js
const DAYS = ['ПН', 'ВТ', 'СР', 'ЧТ', 'ПТ', 'СБ', 'ВС'];

// lead: empty cells before the 1st; before/after: greyed days of the neighbouring months
const MONTHS = [
  { name: 'Декабрь', year: 2016, days: 31, lead: 0, before: [28, 29, 30], week: [49, 50, 51, 52, 1, ''], sel: [19, 25], arrows: 'left' },
  { name: 'Январь', year: 2017, days: 31, lead: 6, week: [1, 2, 3, 4, 5, 6], now: 12, arrows: 'right' },
  { name: 'Февраль', year: 2017, days: 28, lead: 2, week: [6, 7, 8, 9, 10, ''] },
  { name: 'Март', year: 2017, days: 31, lead: 2, week: [10, 11, 12, 13, 14, ''] },
  { name: 'Апрель', year: 2017, days: 30, lead: 5, week: [14, 15, 16, 17, 18, ''] },
  { name: 'Май', year: 2017, days: 31, lead: 0, after: 11, week: [19, 20, 21, 22, 23, 24] }
];

const tri = { left: 'M5 0v7L1 3.500z', right: 'M0 0v7l4-3.500z' };
const arrow = side => `<button class="round ${side}" aria-label="${side === 'left' ? 'Назад' : 'Вперед'}"><svg width="5" height="7"><path d="${tri[side]}" fill="#74757f"/></svg></button>`;

function monthHtml(m) {
  const cells = [];
  for (let i = 0; i < m.lead; i++) cells.push(['', '']);
  (m.before || []).forEach(d => cells.push([d, 'out']));
  for (let d = 1; d <= m.days; d++) {
    let cls = cells.length % 7 > 4 ? 'we' : '';
    if (m.sel && d >= m.sel[0] && d <= m.sel[1]) cls += ' sel';
    if (d === m.now) cls += ' now';
    cells.push([d, cls]);
  }
  for (let d = 1; d <= (m.after || 0); d++) cells.push([d, 'out']);
  while (cells.length < 42) cells.push(['', '']);

  const l = m.arrows === 'left' ? arrow('left') : '<i></i>';
  const r = m.arrows === 'right' ? arrow('right') : '<i></i>';
  const rows = m.week.map((w, i) => `<tr><td class="wk">${w}</td>` +
    cells.slice(i * 7, i * 7 + 7).map(([d, c]) => `<td class="${c}">${d}</td>`).join('') + '</tr>').join('');
  return `<div><div class="mhead">${l}<span>${m.name}</span>${r}<i></i>${l}<span>${m.year}</span>${r}</div>` +
    `<table class="month"><thead><tr><th class="wk"></th>${DAYS.map(d => `<th>${d}</th>`).join('')}</tr></thead><tbody>${rows}</tbody></table></div>`;
}
document.getElementById('months').innerHTML = MONTHS.map(monthHtml).join('');

let slots = '';
for (let h = 0; h < 15; h++) {
  const tds = DAYS.map((d, i) => `<td class="${h < 9 || i > 4 ? 'off' : ''}"></td>`).join('');
  slots += `<tr class="hour"><th rowspan="2"><div class="hr"><b>${h}</b><small>00</small></div></th>${tds}</tr><tr>${tds}</tr>`;
}
document.getElementById('slots').innerHTML = slots;
```
